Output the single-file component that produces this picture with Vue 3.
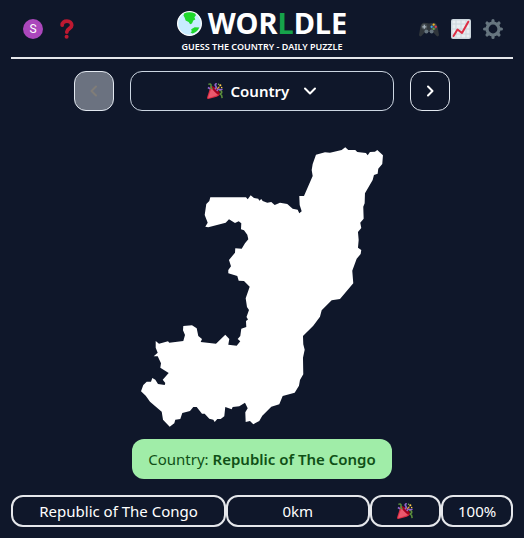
<script setup>
import { ref } from 'vue'

const mode = ref('country')
const modes = [{ value: 'country', label: 'Country' }]
const guess = { name: 'Republic of The Congo', distance: '0km', percent: '100%' }
</script>

<template>
  <svg class="sprite" aria-hidden="true">
    <symbol id="popper" viewBox="0 0 36 36">
      <path fill="#dd2e44" d="M11 7 L29 25 Q28 29 22 31 L3 36 Q0 36 0 33 L6 14 Q8 8 11 7Z" />
      <path fill="#ea596e" d="M10 12 L24 27 L4 34 Q2 34 3 31Z" />
      <ellipse cx="20" cy="17" rx="4" ry="12" transform="rotate(-45 20 17)" fill="#a0041e" />
      <path fill="none" stroke="#5c913b" stroke-width="3.4" d="M3 3 Q10 0 9 7 Q8 10 12 14 M27 17 Q34 16 33 22 Q27 25 33 28 L34 34" />
      <path fill="none" stroke="#9266cc" stroke-width="3.6" d="M18 14 Q23 10 19 6 Q17 3 22 1 M22 18 Q26 12 30 15 L35 14 M2 10 L7 13" />
      <path fill="none" stroke="#e8a33a" stroke-width="2.6" d="M23 13 L28 8" />
      <circle cx="30" cy="5" r="2.4" fill="#ffcc4d" />
      <circle cx="26" cy="3" r="1.6" fill="#77b255" />
      <circle cx="33" cy="10" r="1.8" fill="#ffcc4d" />
    </symbol>
  </svg>

  <main class="page">
    <header class="header">
      <nav class="side">
        <button class="avatar" aria-label="Profile">S</button>
        <button class="icon" aria-label="Help">
          <svg viewBox="0 0 20 20" width="20" height="20">
            <path d="M5.2 6.2 C5 3.6 7.2 2.2 10 2.2 C13 2.2 14.700 4 14.700 6.200 C14.700 9.800 9.800 9.500 9.800 13" fill="none" stroke="#be1931" stroke-width="3.8" stroke-linecap="round" />
            <circle cx="9.600" cy="17.800" r="2" fill="#be1931" />
          </svg>
        </button>
      </nav>
      <div class="brand">
        <h1 class="title">
          <svg class="globe" viewBox="0 0 24 24" width="25" height="25" aria-hidden="true">
            <circle cx="12" cy="12" r="11.4" fill="#c8ecff" stroke="#fff" stroke-width="1.2" />
            <path fill="#1fd82b" d="M7 2.2 Q12 .3 17.4 2.3 L18.2 4 L16.700 6 L17.600 8.200 L15.600 9.200 L14.400 12 L12.600 12.600 L11.200 10.600 L8.300 9 L7.400 6.400 L6.200 4.400Z M13.600 17.600 L17 15.600 L21.400 15.800 Q19.600 20 15 21.600 L13 20.600 L14.200 19.400Z" />
          </svg>
          <span>WOR<span class="accent">L</span>DLE</span>
        </h1>
        <p class="tagline">GUESS THE COUNTRY - DAILY PUZZLE</p>
      </div>
      <nav class="side end">
        <button class="icon" aria-label="Games">
          <svg viewBox="0 0 20 20" width="20" height="20">
            <path fill="#30363b" d="M4.200 3.800 L8 4 Q10 4.800 12 4 L15.800 3.800 Q18 4.600 18.800 9 L20 16 Q19.400 18.200 17.600 17 L14 13 H6 L2.400 17 Q.6 18.200 0 16 L1.200 9 Q2 4.600 4.200 3.800Z" />
            <circle cx="5.300" cy="7.800" r="3" fill="#454d53" />
            <circle cx="14.700" cy="7.800" r="3" fill="#454d53" />
            <path stroke="#a7b3bb" stroke-width="1.300" d="M5.300 5.800V9.800M3.300 7.800H7.300" />
            <circle cx="14.700" cy="5.600" r="1.100" fill="#f4b91d" />
            <circle cx="12.600" cy="7.800" r="1.100" fill="#37a7ee" />
            <circle cx="16.800" cy="7.800" r="1.100" fill="#e8344c" />
            <circle cx="14.700" cy="9.900" r="1.100" fill="#61a746" />
            <circle cx="7.400" cy="12.600" r="2" fill="#66757f" />
            <circle cx="12.600" cy="12.600" r="2" fill="#66757f" />
          </svg>
        </button>
        <button class="icon" aria-label="Statistics">
          <svg viewBox="0 0 20 20" width="20" height="20">
            <rect width="20" height="20" rx="2" fill="#ccd6dd" />
            <path fill="#e9eef1" d="M1.500 1.500h3v3h-3zM5.500 1.500h4v3h-4zM10.500 1.500h4v3h-4zM15.500 1.500h3v3h-3zM1.500 5.500h3v4h-3zM5.500 5.500h4v4h-4zM10.500 5.500h4v4h-4zM15.500 5.500h3v4h-3zM1.500 10.500h3v4h-3zM5.500 10.500h4v4h-4zM10.500 10.500h4v4h-4zM15.500 10.500h3v4h-3zM1.500 15.500h3v3h-3zM5.500 15.500h4v3h-4zM10.500 15.500h4v3h-4zM15.500 15.500h3v3h-3z" />
            <path d="M2.500 17 L6.500 10.500 L11 14 L17.300 2.700" fill="none" stroke="#dd2e44" stroke-width="2" stroke-linecap="round" stroke-linejoin="round" />
          </svg>
        </button>
        <button class="icon" aria-label="Settings">
          <svg viewBox="0 0 20 20" width="20" height="20">
            <circle cx="10" cy="10" r="6" fill="none" stroke="#66757f" stroke-width="3.200" />
            <g stroke="#66757f" stroke-width="3.200" stroke-linecap="round">
              <path d="M10 1.600V3M10 17V18.400M1.600 10H3M17 10H18.400M4.050 4.050L5 5M15 15L15.950 15.950M4.050 15.950L5 15M15 5L15.950 4.050" />
            </g>
          </svg>
        </button>
      </nav>
    </header>

    <div class="controls">
      <button class="step" disabled aria-label="Previous step">
        <svg viewBox="0 0 16 16" width="16" height="16"><path d="M10 3.500L5.500 8L10 12.500" /></svg>
      </button>
      <label class="picker">
        <svg class="popper" aria-hidden="true"><use href="#popper" /></svg>
        <select v-model="mode" aria-label="Step">
          <option v-for="m in modes" :key="m.value" :value="m.value">{{ m.label }}</option>
        </select>
        <svg class="chevron" viewBox="0 0 16 16" width="16" height="16"><path d="M3 5.500L8 10.500L13 5.500" /></svg>
      </label>
      <button class="step" aria-label="Next step">
        <svg viewBox="0 0 16 16" width="16" height="16"><path d="M6 3.500L10.500 8L6 12.500" /></svg>
      </button>
    </div>

    <svg class="map" viewBox="139 146 246 282" role="img" aria-label="Country outline">
      <path d="M210.300 197.300L246 197.300L247.700 199.300L250.700 195.300L254 198L258.300 198.700L259.300 200.700L261.300 199L262.700 201L267.300 202.700L271.300 202L274.700 205L280 202.700L287.300 204L292.700 208.700L297.700 209.700L299.300 213.300L301.700 211.300L299.700 205L299.300 196L304 196L312.700 176L311.700 170L312.700 164L316 154.700L325 152.300L330 152.700L341.700 150L345.300 147.300L348.300 150L355.300 150L357.300 152L366 153L367.700 155.300L370 152L375 151.700L377.300 150L383 155.300L382.300 164L378.300 168.700L377.700 173.700L374 175L372.700 180L365 193.300L364.700 203.300L363.300 206.700L363.700 218.700L360.300 222.700L361.300 228L358 232L358.700 240L358 247.700L361.300 250L360.700 254L356.700 258.700L352.300 270.700L353.300 283.300L340 299L331.700 300.300L321.700 310.300L320 316.700L313.300 325.700L303 336L303.300 344.300L304.700 349.700L303 357.700L303.300 374.300L300 380L299 385.700L294.700 392.700L282.700 396L279.300 404.300L271.300 406.700L262.300 415.700L259.300 421L253.300 424.300L250 421L245.700 422L245.300 412.300L247.700 408.300L245 402.700L239.300 406.300L232.700 407L231.700 409.300L225.300 407L224.300 416.300L220.700 419L217.300 419L214.700 422L213.300 419.700L209.300 418.700L204.700 413.700L202 413.700L196.700 407L193.300 407L190 411L182.300 413L180.300 419L175.300 419.700L174.300 423.300L169.700 426.700L163 419.700L161.700 411.700L150 401.700L145.700 395.700L141 391.300L143.300 385L146.700 381.700L151 381.700L152.300 378L155.300 379.700L158 384L164.700 385L165.300 383L162.700 379.700L168.700 373L160.300 367.700L161 363.300L157.700 356.300L153.700 356.300L157.700 352.700L155.700 347.700L155.700 341L159 343.700L168 341.300L169.300 342.700L183.300 341L185 335L183 330.300L183.300 326L192 325.300L196.700 328.300L198.300 336L202 339L200.700 342L216 343.700L225.300 334.700L229.300 339L228.300 344.700L236.700 345.700L240.300 341.300L237.700 339L240.300 336L241.300 328.700L246.300 327L246 321L248 319.500L246.500 317L249 310L247 307L245.700 298.300L249.700 286.700L244 281L238.700 280.700L237.300 276L228.300 273.300L228.300 270L231 266.300L229 260L235 252.700L235.300 248.300L241.700 248.700L245 243.300L248.300 239.300L247.300 234.700L244 230.300L241 229.300L241.300 223.300L238.700 221.300L235 223L229 219.300L225.700 222.700L208.300 227.300L205.300 226.700L207.700 222.700L204.700 215L206.300 204L209.300 201Z" />
    </svg>

    <p class="answer">Country: <b>{{ guess.name }}</b></p>

    <div class="guess">
      <div class="cell">{{ guess.name }}</div>
      <div class="cell">{{ guess.distance }}</div>
      <div class="cell"><svg class="popper" role="img" aria-label="Correct"><use href="#popper" /></svg></div>
      <div class="cell">{{ guess.percent }}</div>
    </div>
  </main>
</template>

<style>
body {
  background: #0f172a;
}
</style>

<style scoped>
.sprite {
  position: absolute;
  width: 0;
  height: 0;
}
.page {
  display: flex;
  flex-direction: column;
  align-items: center;
  padding: 0 11px 11px;
  color: #fff;
  font: 15px/24px "Segoe UI", "Noto Sans", "Open Sans", sans-serif;
}
button {
  padding: 0;
  border: 0;
  background: none;
  color: inherit;
  font: inherit;
  cursor: pointer;
}
svg {
  display: block;
}
.header {
  display: grid;
  grid-template-columns: 1fr auto 1fr;
  align-self: stretch;
  border-bottom: 2px solid #e5e7eb;
}
.side {
  display: flex;
  align-items: center;
  gap: 12px;
  padding: 0 10px;
}
.end {
  justify-content: flex-end;
}
.icon,
.avatar {
  width: 20px;
  height: 20px;
}
.avatar {
  border-radius: 50%;
  background: #ab47bc;
  font: 12px/20px Roboto, sans-serif;
  margin: 0 2px;
}
.brand {
  text-align: center;
  padding-bottom: 5px;
}
.title {
  display: flex;
  align-items: center;
  justify-content: center;
  gap: 6px;
  margin: 0;
  font-size: 29px;
  line-height: 38px;
  padding-top: 4px;
  font-weight: 700;
}
.accent {
  color: #16a34a;
}
.tagline {
  margin: 0;
  font-size: 9px;
  line-height: 10px;
  font-weight: 600;
}
.controls {
  display: flex;
  gap: 16px;
  width: 75%;
  margin-top: 12px;
}
.step {
  display: grid;
  place-items: center;
  width: 40px;
  height: 40px;
  box-sizing: border-box;
  border: 1px solid #e2e8f0;
  border-radius: 12px;
}
.step:disabled {
  background: #6b7280;
  color: #807d78;
  cursor: default;
}
.step path,
.chevron path {
  fill: none;
  stroke: currentColor;
  stroke-width: 2;
  stroke-linecap: round;
  stroke-linejoin: round;
}
.picker {
  flex: 1;
  display: flex;
  align-items: center;
  justify-content: center;
  gap: 8px;
  border: 1px solid #cbd5e1;
  border-radius: 12px;
}
.picker select {
  appearance: none;
  padding: 0;
  border: 0;
  background: none;
  color: inherit;
  font: inherit;
  font-weight: 600;
}
.chevron {
  margin-left: 4px;
}
.popper {
  width: 16px;
  height: 16px;
}
.map {
  width: 49%;
  margin-top: 35px;
  fill: #fff;
}
.answer {
  margin: 11px 0 16px;
  padding: 8px 16px;
  border-radius: 12px;
  background: #a0eda8;
  color: #0f5016;
}
.answer b {
  font-weight: 600;
}
.guess {
  display: grid;
  grid-template-columns: 3fr 2fr 1fr 1fr;
  align-self: stretch;
}
.cell {
  display: flex;
  align-items: center;
  justify-content: center;
  height: 28px;
  border: 2px solid #e5e7eb;
  border-radius: 12px;
}
</style>
